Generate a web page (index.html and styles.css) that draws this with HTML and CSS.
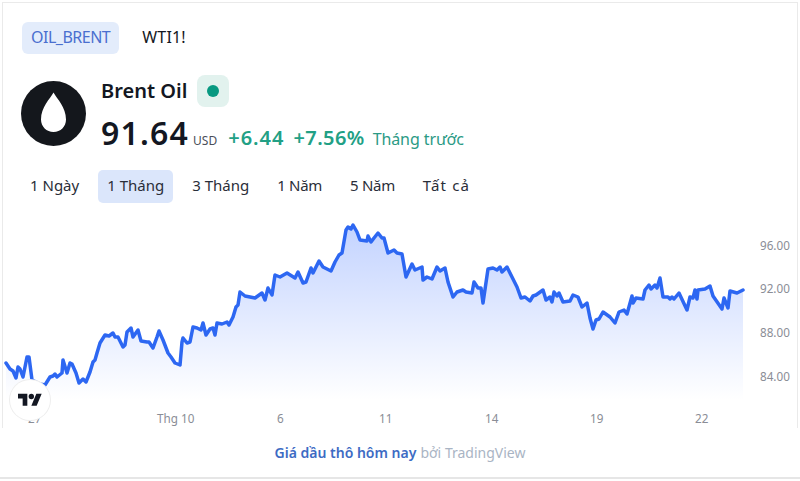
FILE: index.html
```html
<!DOCTYPE html>
<html lang="vi">
<head>
<meta charset="utf-8">
<title>Brent Oil</title>
<link rel="stylesheet" href="styles.css">
</head>
<body>
<div class="page">
  <main class="widget">
    <nav class="symbols">
      <span class="tab tab-on">OIL_BRENT</span>
      <span class="tab tab-plain">WTI1!</span>
    </nav>
    <section class="head">
      <svg class="logo" viewBox="0 0 65 65" aria-hidden="true">
        <circle cx="32.5" cy="32.5" r="32.5" fill="#14171c"/>
        <path d="M32.5 11.5C29 18 20 26 20 38.5C20 45.5 25.500 51 32.5 51S45 45.500 45 38.500C45 26 36 18 32.5 11.500Z" fill="#fff"/>
      </svg>
      <div class="info">
        <div class="name-row">
          <span class="name">Brent Oil</span>
          <span class="status"><i class="dot"></i></span>
        </div>
        <div class="price-row">
          <span class="price">91.64</span>
          <span class="cur">USD</span>
          <span class="chg chg-abs">+6.44</span>
          <span class="chg chg-pct">+7.56%</span>
          <span class="period">Tháng trước</span>
        </div>
      </div>
    </section>
    <nav class="ranges">
      <span class="range">1 Ngày</span>
      <span class="range range-on">1 Tháng</span>
      <span class="range">3 Tháng</span>
      <span class="range range-tight">1 Năm</span>
      <span class="range range-tight">5 Năm</span>
      <span class="range range-wide">Tất cả</span>
    </nav>
    <div class="chart">
      <svg class="plot" viewBox="0 210 794 216">
        <defs>
          <linearGradient id="area" x1="0" y1="225" x2="0" y2="400" gradientUnits="userSpaceOnUse">
            <stop offset="0" stop-color="#2962ff" stop-opacity=".28"/>
            <stop offset="1" stop-color="#2962ff" stop-opacity="0"/>
          </linearGradient>
        </defs>
        <g transform="translate(-1 0)">
        <path fill="url(#area)" d="M4 363L8 369L11 371L14 378L16 367L18 369L21 377L25 357L27 357L30 380L38 384L43 385L48 377L51 376L53 374L55 377L60 373L61 360L65 373L68 363L70 364L74 373L77 383L81 379L84 382L88 372L91 362L93 360L95 353L98 343L103 335L107 336L111 333L113 337L116 337L121 347L123 345L125 332L129 328L131 337L136 330L139 341L145 342L147 342L151 348L155 337L157 331L161 340L166 353L169 357L173 363L178 365L180 342L181 338L185 343L188 342L191 327L195 328L199 330L201 323L204 335L208 329L211 328L213 335L215 323L220 324L225 322L227 325L231 317L234 307L236 305L238 292L243 296L248 297L253 298L260 293L263 300L266 288L270 295L273 275L278 277L285 273L293 278L296 272L301 283L304 282L309 268L311 273L317 261L321 267L329 271L333 262L337 255L340 253L344 230L346 227L349 229L351 225L355 232L358 240L365 241L366 236L369 242L372 238L376 233L380 238L382 238L386 253L392 250L395 253L400 254L404 277L410 264L413 270L420 267L421 280L425 277L430 279L435 267L438 271L443 268L446 282L451 297L455 292L461 290L464 292L470 293L472 282L476 288L479 288L481 303L486 269L491 268L495 270L498 267L500 272L505 267L510 277L515 287L519 298L523 297L528 301L531 296L534 295L541 290L544 300L548 297L550 302L552 292L555 296L557 293L561 302L568 301L571 295L576 297L580 307L585 303L588 318L591 329L594 320L597 319L601 312L608 317L613 323L617 312L622 310L625 314L630 296L631 303L634 298L641 299L643 290L647 285L649 289L653 285L655 288L658 278L661 297L666 297L668 299L670 297L672 299L677 293L685 310L688 297L691 298L693 290L695 299L696 290L703 289L708 286L711 296L720 309L722 298L726 308L728 291L735 293L741 290V400H4Z"/>
        <path class="line" d="M4 363L8 369L11 371L14 378L16 367L18 369L21 377L25 357L27 357L30 380L38 384L43 385L48 377L51 376L53 374L55 377L60 373L61 360L65 373L68 363L70 364L74 373L77 383L81 379L84 382L88 372L91 362L93 360L95 353L98 343L103 335L107 336L111 333L113 337L116 337L121 347L123 345L125 332L129 328L131 337L136 330L139 341L145 342L147 342L151 348L155 337L157 331L161 340L166 353L169 357L173 363L178 365L180 342L181 338L185 343L188 342L191 327L195 328L199 330L201 323L204 335L208 329L211 328L213 335L215 323L220 324L225 322L227 325L231 317L234 307L236 305L238 292L243 296L248 297L253 298L260 293L263 300L266 288L270 295L273 275L278 277L285 273L293 278L296 272L301 283L304 282L309 268L311 273L317 261L321 267L329 271L333 262L337 255L340 253L344 230L346 227L349 229L351 225L355 232L358 240L365 241L366 236L369 242L372 238L376 233L380 238L382 238L386 253L392 250L395 253L400 254L404 277L410 264L413 270L420 267L421 280L425 277L430 279L435 267L438 271L443 268L446 282L451 297L455 292L461 290L464 292L470 293L472 282L476 288L479 288L481 303L486 269L491 268L495 270L498 267L500 272L505 267L510 277L515 287L519 298L523 297L528 301L531 296L534 295L541 290L544 300L548 297L550 302L552 292L555 296L557 293L561 302L568 301L571 295L576 297L580 307L585 303L588 318L591 329L594 320L597 319L601 312L608 317L613 323L617 312L622 310L625 314L630 296L631 303L634 298L641 299L643 290L647 285L649 289L653 285L655 288L658 278L661 297L666 297L668 299L670 297L672 299L677 293L685 310L688 297L691 298L693 290L695 299L696 290L703 289L708 286L711 296L720 309L722 298L726 308L728 291L735 293L741 290"/>
        </g>
        <g class="axis">
          <text x="757" y="250">96.00</text>
          <text x="757" y="293">92.00</text>
          <text x="757" y="337">88.00</text>
          <text x="757" y="381">84.00</text>
          <text x="25" y="423">27</text>
          <text x="154" y="423">Thg 10</text>
          <text x="274" y="423">6</text>
          <text x="376" y="423">11</text>
          <text x="482" y="423">14</text>
          <text x="587" y="423">19</text>
          <text x="692" y="423">22</text>
        </g>
      </svg>
      <span class="badge">
        <svg viewBox="0 0 36 28" width="24" height="19" aria-hidden="true">
          <path d="M14 22H7V11H0V4h14v18zM28 22h-8l7.500-18h8L28 22z" fill="#131722"/>
          <circle cx="20" cy="8" r="4" fill="#131722"/>
        </svg>
      </span>
    </div>
  </main>
  <footer class="foot"><span class="foot-link">Giá dầu thô hôm nay</span> <span class="foot-by">bởi TradingView</span></footer>
</div>
</body>
</html>
```
FILE: styles.css
```css
* { box-sizing: border-box; }
html, body { margin: 0; background: #fff; }
body { width: 800px; height: 481px; overflow: hidden; font-family: "Noto Sans", "Liberation Sans", sans-serif; color: #131722; }
.page { display: flex; flex-direction: column; width: 800px; height: 479px; padding-top: 2px; border-bottom: 2px solid #e6e6e6; }
.widget { height: 426px; margin: 0 2px; border: 1px solid #eaeaea; border-bottom: 0; padding: 19px 0 0 0; display: flex; flex-direction: column; }
.symbols { display: flex; gap: 14px; margin-left: 19px; height: 32px; }
.tab { display: flex; align-items: center; padding: 0 9px 2px; height: 32px; font-size: 16px; border-radius: 6px; }
.tab-on { background: #e3ecfb; color: #4a6fcf; letter-spacing: -.5px; }
.tab-plain { letter-spacing: .2px; }
.head { display: flex; gap: 15px; margin: 21px 0 0 18px; align-items: flex-start; }
.logo { width: 65px; height: 65px; margin-top: 6px; flex: none; }
.info { display: flex; flex-direction: column; }
.name-row { display: flex; align-items: center; gap: 10px; height: 32px; }
.name { font-size: 20px; font-weight: 600; line-height: 30px; }
.status { display: flex; align-items: center; justify-content: center; width: 32px; height: 32px; border-radius: 8px; background: #e2f2ee; }
.dot { width: 12px; height: 12px; border-radius: 50%; background: #089981; }
.price-row { display: flex; align-items: baseline; margin-top: 5px; height: 42px; }
.price { font-size: 32px; font-weight: 600; line-height: 42px; letter-spacing: 1.2px; }
.cur { font-size: 12px; margin-left: 4px; color: #4a4e59; }
.chg { font-size: 20px; font-weight: 600; color: #22a085; }
.chg-abs { margin-left: 11px; letter-spacing: 1px; }
.chg-pct { margin-left: 9px; letter-spacing: .4px; }
.period { font-size: 16px; color: #2b9a85; margin-left: 8px; letter-spacing: -.1px; }
.ranges { display: flex; gap: 10px; margin: 16px 0 0 18px; height: 33px; }
.range { display: flex; align-items: center; padding: 0 9px 3px; font-size: 15px; border-radius: 5px; color: #2a2e39; }
.range-on { background: #dbe6fb; }
.range-tight { letter-spacing: -.3px; }
.range-wide { letter-spacing: 1.1px; }
.chart { position: relative; flex: 1; min-height: 0; margin-top: 7px; }
.plot { display: block; width: 794px; height: 216px; }
.line { fill: none; stroke: #2d67f2; stroke-width: 3.5; stroke-linejoin: round; stroke-linecap: round; }
.axis { font-size: 11.7px; fill: #8a8d96; font-family: "Noto Sans", "Liberation Sans", sans-serif; }
.badge { position: absolute; left: 7px; top: 170px; width: 40px; height: 40px; display: flex; align-items: center; justify-content: center; border-radius: 50%; background: #fff; box-shadow: 0 0 0 1px #eeeeee; }
.foot { height: 49px; display: flex; align-items: center; justify-content: center; gap: 4px; font-size: 14px; }
.foot-link { color: #3d6bc4; font-weight: 600; }
.foot-by { color: #a9b4c4; }
```
